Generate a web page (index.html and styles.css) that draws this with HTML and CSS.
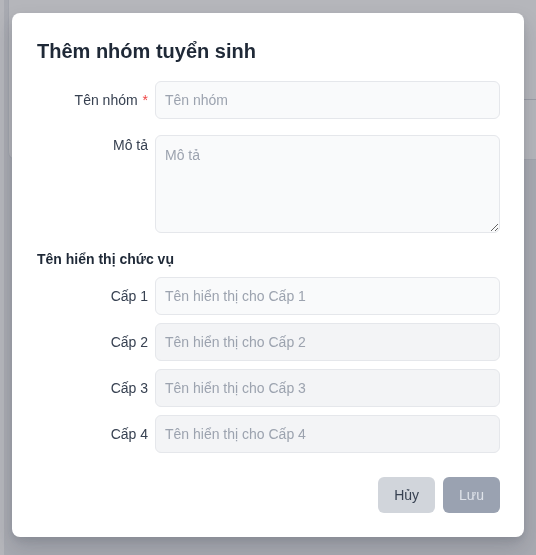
FILE: index.html
```html
<!DOCTYPE html>
<html lang="vi">
<head>
<meta charset="utf-8">
<title>Thêm nhóm tuyển sinh</title>
<link rel="stylesheet" href="styles.css">
</head>
<body>
<div class="page">
  <aside class="rail"></aside>
  <main class="main">
    <section class="card">
      <div class="card-head"></div>
    </section>
  </main>
</div>

<div class="overlay">
  <div class="modal" role="dialog" aria-labelledby="modal-title">
    <h2 class="modal-title" id="modal-title">Thêm nhóm tuyển sinh</h2>
    <form class="form">
      <div class="row">
        <label class="label" for="name">Tên nhóm <span class="req">*</span></label>
        <input class="field" id="name" type="text" placeholder="Tên nhóm">
      </div>
      <div class="row row-top">
        <label class="label" for="desc">Mô tả</label>
        <textarea class="field area" id="desc" placeholder="Mô tả"></textarea>
      </div>

      <h3 class="section-title">Tên hiển thị chức vụ</h3>

      <div class="levels">
        <div class="row">
          <label class="label" for="l1">Cấp 1</label>
          <input class="field" id="l1" type="text" placeholder="Tên hiển thị cho Cấp 1">
        </div>
        <div class="row">
          <label class="label" for="l2">Cấp 2</label>
          <input class="field field-off" id="l2" type="text" placeholder="Tên hiển thị cho Cấp 2" disabled>
        </div>
        <div class="row">
          <label class="label" for="l3">Cấp 3</label>
          <input class="field field-off" id="l3" type="text" placeholder="Tên hiển thị cho Cấp 3" disabled>
        </div>
        <div class="row">
          <label class="label" for="l4">Cấp 4</label>
          <input class="field field-off" id="l4" type="text" placeholder="Tên hiển thị cho Cấp 4" disabled>
        </div>
      </div>

      <div class="actions">
        <button type="button" class="btn btn-cancel">Hủy</button>
        <button type="button" class="btn btn-save" disabled>Lưu</button>
      </div>
    </form>
  </div>
</div>
</body>
</html>
```

FILE: styles.css
```css
* { box-sizing: border-box; }

html, body {
  margin: 0;
  padding: 0;
  height: 100%;
}

body {
  font-family: "Liberation Sans", Arial, sans-serif;
  background: #e5e7eb;
  color: #374151;
  overflow: hidden;
}

/* underlying page */
.page {
  display: flex;
  height: 100%;
}

.rail {
  width: 4px;
  background: #ffffff;
  flex: none;
}

.main {
  flex: 1;
  padding-left: 4px;
}

.card {
  height: 160px;
  background: #ffffff;
  border: 1px solid #d9dce2;
  border-top: none;
  border-right: none;
  border-radius: 0 0 0 8px;
}

.card-head {
  height: 100px;
  margin-left: 500px;
  border-bottom: 1px solid #c9ccd4;
}

/* overlay + modal */
.overlay {
  position: fixed;
  inset: 0;
  background: rgba(107, 110, 120, 0.5);
  display: flex;
  justify-content: center;
  align-items: flex-start;
  padding-top: 13px;
}

.modal {
  width: 512px;
  background: #ffffff;
  border-radius: 8px;
  padding: 24px;
  box-shadow: 0 10px 20px rgba(30, 35, 50, 0.18), 0 3px 6px rgba(30, 35, 50, 0.08);
}

.modal-title {
  margin: 0 0 16px 1px;
  font-size: 20px;
  line-height: 28px;
  font-weight: 700;
  color: #1f2937;
}

.form {
  margin: 0;
}

.row {
  display: grid;
  grid-template-columns: 112px 1fr;
  column-gap: 7px;
  align-items: center;
}

.row + .row {
  margin-top: 16px;
}

.row-top {
  align-items: start;
}

.label {
  text-align: right;
  font-size: 14px;
  line-height: 20px;
  color: #374151;
}

.req {
  color: #ef4444;
  margin-left: 1px;
}

.field {
  display: block;
  width: 100%;
  height: 38px;
  padding: 0 9px;
  border: 1px solid #e5e7eb;
  border-radius: 6px;
  background: #f9fafb;
  font-family: "Liberation Sans", Arial, sans-serif;
  font-size: 14px;
  color: #374151;
  outline: none;
}

.field::placeholder {
  color: #9ca3af;
  opacity: 1;
}

.area {
  height: 98px;
  padding: 9px 9px;
  line-height: 20px;
  resize: vertical;
}

.field-off {
  background: #f3f4f6;
}

.section-title {
  margin: 16px 0 8px 1px;
  font-size: 14px;
  line-height: 20px;
  font-weight: 700;
  color: #1f2937;
}

.levels .row + .row {
  margin-top: 8px;
}

.actions {
  display: flex;
  justify-content: flex-end;
  gap: 8px;
  margin-top: 24px;
}

.btn {
  height: 36px;
  padding: 0 16px;
  border: none;
  border-radius: 6px;
  font-family: "Liberation Sans", Arial, sans-serif;
  font-size: 14px;
  line-height: 36px;
}

.btn-cancel {
  background: #d1d5db;
  color: #374151;
}

.btn-save {
  background: #9aa2b1;
  color: #dfe3ea;
}
```
